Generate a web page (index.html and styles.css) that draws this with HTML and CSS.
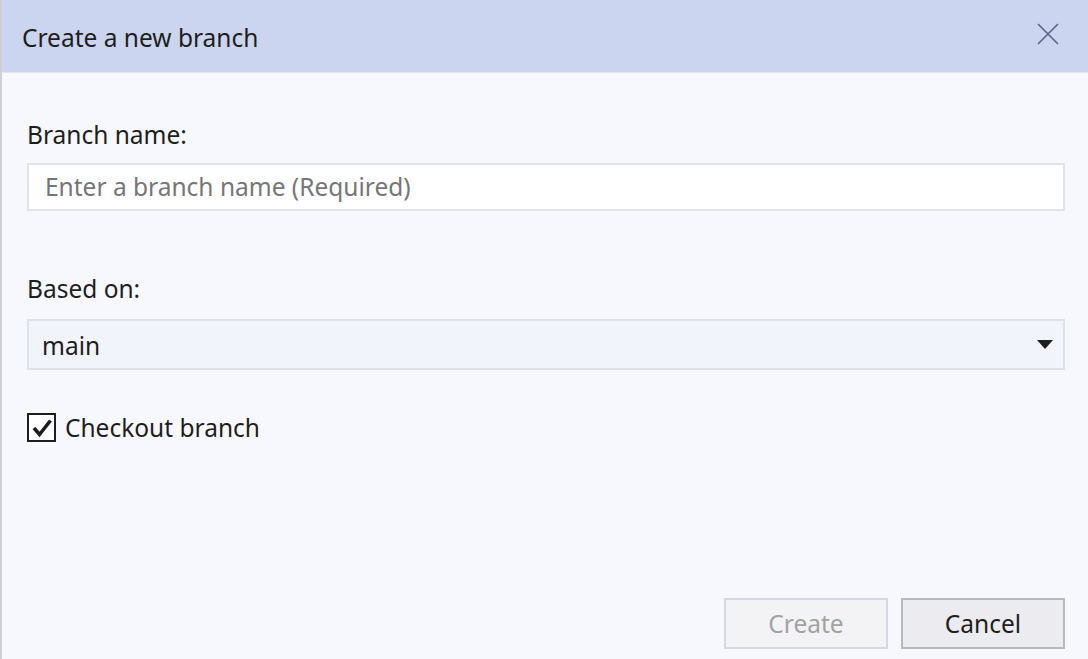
FILE: index.html
```html
<!DOCTYPE html>
<html lang="en">
<head>
<meta charset="utf-8">
<title>Create a new branch</title>
<link rel="stylesheet" href="styles.css">
</head>
<body>
<div class="dialog">
  <header class="titlebar">
    <span class="title">Create a new branch</span>
    <button class="close" aria-label="Close">
      <svg width="22" height="22" viewBox="0 0 22 22"><path d="M1 1 L21 21 M21 1 L1 21" stroke="#5a6287" stroke-width="1.6" fill="none"/></svg>
    </button>
  </header>
  <main class="content">
    <label class="label first">Branch name:</label>
    <div class="input"><span class="placeholder">Enter a branch name (Required)</span></div>
    <label class="label second">Based on:</label>
    <div class="select">
      <span class="value">main</span>
      <svg class="caret" width="16" height="9" viewBox="0 0 16 9"><path d="M0 0 H16 L8 9 Z" fill="#1e1e1e"/></svg>
    </div>
    <div class="check">
      <span class="box">
        <svg width="22" height="22" viewBox="0 0 22 22"><path d="M3 11 L8.5 17.5 L19.5 3.5" stroke="#1e1e1e" stroke-width="3.6" fill="none" stroke-linejoin="miter"/></svg>
      </span>
      <span class="check-text">Checkout branch</span>
    </div>
    <div class="spacer"></div>
    <div class="buttons">
      <button class="btn disabled">Create</button>
      <button class="btn">Cancel</button>
    </div>
  </main>
</div>
</body>
</html>
```

FILE: styles.css
```css
html, body {
  margin: 0;
  padding: 0;
  height: 100%;
}
body {
  font-family: "Noto Sans", "Open Sans", sans-serif;
  color: #1e1e1e;
  background: #f7f8fd;
}
.dialog {
  height: 659px;
  display: flex;
  flex-direction: column;
  border-left: 2px solid #cfd0d6;
  box-sizing: border-box;
}
.titlebar {
  height: 73px;
  flex: none;
  box-sizing: border-box;
  background: #cbd5ef;
  border-bottom: 1px solid #dfe5f6;
  display: flex;
  align-items: center;
  justify-content: space-between;
  padding: 0 29px 0 20px;
}
.title {
  font-size: 24.5px;
  line-height: 32px;
  color: #1e1e1e;
  margin-top: 3px;
}
.close {
  border: none;
  background: none;
  padding: 0;
  width: 22px;
  height: 22px;
  display: block;
  margin-bottom: 5px;
}
.close svg { display: block; }
.content {
  flex: 1;
  display: flex;
  flex-direction: column;
  padding: 0 23px 10px 25px;
}
.label {
  font-size: 24.5px;
  line-height: 28px;
  display: block;
}
.label.first { margin-top: 48px; margin-bottom: 14px; }
.label.second { margin-top: 64px; margin-bottom: 16px; }
.input {
  height: 48px;
  box-sizing: border-box;
  background: #ffffff;
  border: 2px solid #e1e3eb;
  display: flex;
  align-items: center;
  padding-left: 16px;
}
.placeholder {
  font-size: 24.5px;
  line-height: 30px;
  color: #767676;
}
.select {
  height: 51px;
  box-sizing: border-box;
  background: #f1f4fb;
  border: 2px solid #dfe1ea;
  display: flex;
  align-items: center;
  justify-content: space-between;
  padding: 2px 10px 0 13px;
}
.value { font-size: 24.5px; line-height: 30px; }
.caret { display: block; margin-top: -2px; }
.check {
  margin-top: 43px;
  display: flex;
  align-items: center;
  gap: 9px;
}
.box {
  width: 29px;
  height: 29px;
  box-sizing: border-box;
  border: 2px solid #1e1e1e;
  background: #ffffff;
  display: flex;
  align-items: center;
  justify-content: center;
}
.box svg { display: block; }
.check-text { font-size: 24.5px; line-height: 29px; }
.spacer { flex: 1; }
.buttons {
  display: flex;
  justify-content: flex-end;
  gap: 13px;
}
.btn {
  width: 164px;
  height: 51px;
  box-sizing: border-box;
  font-family: inherit;
  font-size: 24.5px;
  color: #1e1e1e;
  background: #ebebf0;
  border: 2px solid #b9b9bd;
  padding: 0;
}
.btn.disabled {
  color: #a2a2a2;
  background: #f3f3f6;
  border-color: #d5d7e6;
}
```
